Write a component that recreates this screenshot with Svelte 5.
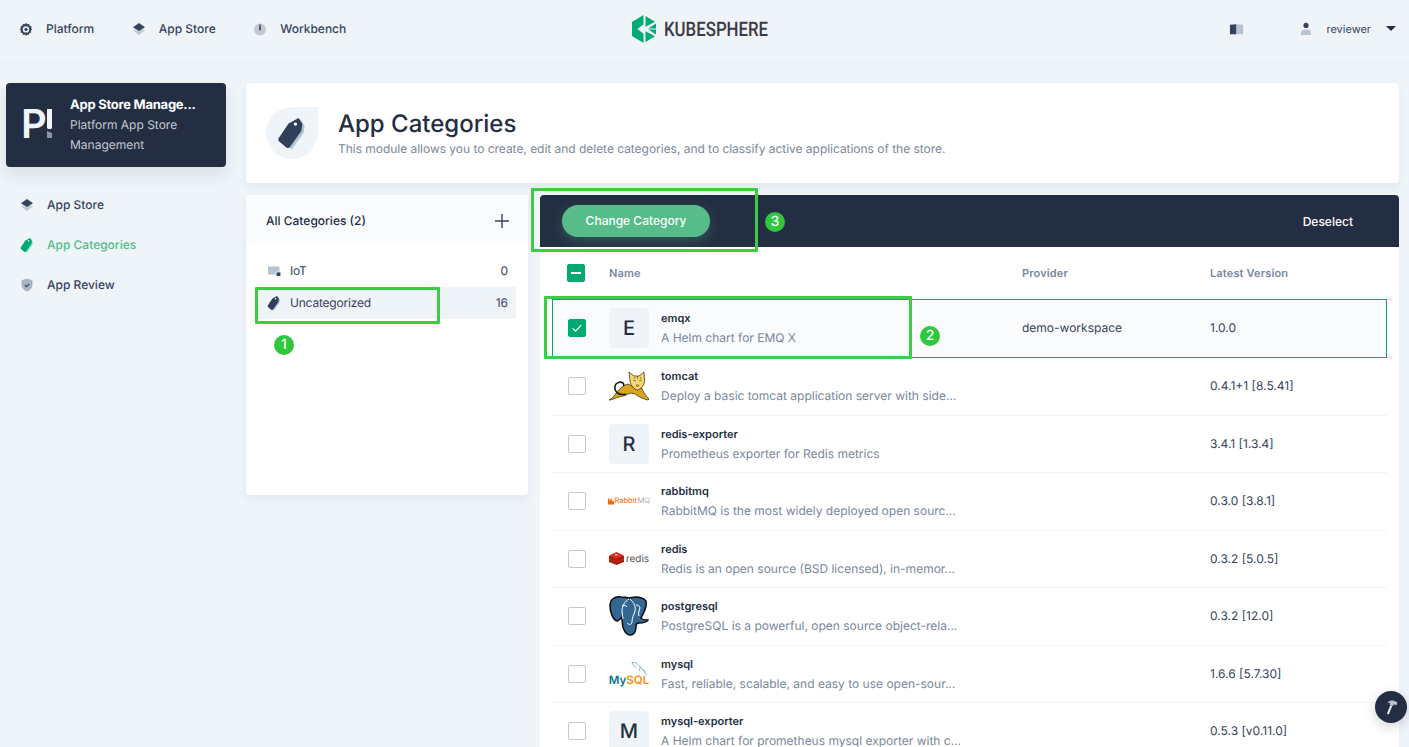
<script lang="ts">
  const navItems = [
    { label: "App Store", icon: "store", active: false },
    { label: "App Categories", icon: "tag", active: true },
    { label: "App Review", icon: "review", active: false },
  ];

  const apps = [
    { name: "emqx", desc: "A Helm chart for EMQ X", provider: "demo-workspace", version: "1.0.0", logo: "E", selected: true },
    { name: "tomcat", desc: "Deploy a basic tomcat application server with side...", provider: "", version: "0.4.1+1 [8.5.41]", logo: "tomcat" },
    { name: "redis-exporter", desc: "Prometheus exporter for Redis metrics", provider: "", version: "3.4.1 [1.3.4]", logo: "R" },
    { name: "rabbitmq", desc: "RabbitMQ is the most widely deployed open sourc...", provider: "", version: "0.3.0 [3.8.1]", logo: "rabbitmq" },
    { name: "redis", desc: "Redis is an open source (BSD licensed), in-memor...", provider: "", version: "0.3.2 [5.0.5]", logo: "redis" },
    { name: "postgresql", desc: "PostgreSQL is a powerful, open source object-rela...", provider: "", version: "0.3.2 [12.0]", logo: "postgresql" },
    { name: "mysql", desc: "Fast, reliable, scalable, and easy to use open-sour...", provider: "", version: "1.6.6 [5.7.30]", logo: "mysql" },
    { name: "mysql-exporter", desc: "A Helm chart for prometheus mysql exporter with c...", provider: "", version: "0.5.3 [v0.11.0]", logo: "M" },
  ];
</script>

{#snippet tagIcon(main, back, size = 16)}
  <svg viewBox="0 0 16 16" width={size} height={size}>
    <path d="M7.4 4.500L12.100 1.700L13.900 4.800L13.400 8L8 15.600L3 13z" fill={back} />
    <path d="M6.400 3.500L11.100 .9L12.900 3.800L12.400 7L7 14.600c-.4.5-1 .6-1.500.3L2 12c-.5-.4-.6-1-.3-1.500z" fill={main} />
    <circle cx="9.600" cy="3.800" r=".8" fill="#fff" />
  </svg>
{/snippet}

{#snippet storeIcon()}
  <svg viewBox="0 0 16 16" width="16" height="16">
    <path d="M2 9.200l2.400-1L8 9.800l3.600-1.600 2.400 1L8 14z" fill="#c1c9d1" />
    <path d="M8 2l6 4.200L8 10 2 6.200z" fill="#36435c" />
  </svg>
{/snippet}

<div class="page">
  <header class="topbar">
    <nav class="topnav">
      <a class="topnav-item">
        <svg viewBox="0 0 16 16" width="16" height="16">
          <path d="M8 1.800l1.200 1.500 1.900-.4.6 1.900 1.900.6-.4 1.900L14.200 8.500l-1.300 1.100.4 1.900-1.900.5-.6 1.900-1.900-.4L8 15l-1.100-1.500-1.900.4-.6-1.900-1.900-.5.4-1.900L1.800 8.500l1.100-1.200-.4-1.900 1.900-.6.6-1.900 1.900.4z" fill="#36435c" />
          <circle cx="8" cy="8.400" r="3.200" fill="#eff4f9" />
          <circle cx="8" cy="8.400" r="1.600" fill="#36435c" />
        </svg>
        Platform
      </a>
      <a class="topnav-item">{@render storeIcon()} App Store</a>
      <a class="topnav-item">
        <svg viewBox="0 0 16 16" width="16" height="16">
          <circle cx="8" cy="8.400" r="6" fill="#c1c9d1" />
          <path d="M7.400 3.400h1.200l.3 5.200a.9.9 0 1 1-1.800 0z" fill="#36435c" />
        </svg>
        Workbench
      </a>
    </nav>

    <div class="logo">
      <svg viewBox="0 0 24 28" width="24" height="28">
        <path d="M11.500 0v9.200L5.400 14l6.100 4.800V28L0 21V7z" fill="#00aa72" />
        <path d="M13.500 1l9.500 5.800-9.500 5z" fill="#00aa72" />
        <path d="M24 8.400v5.200l-7.600-.1z" fill="#00aa72" />
        <path d="M24 14.400v5.200l-7.600-5.100z" fill="#00aa72" />
        <path d="M13.500 16.200l9.500 5-9.500 5.800z" fill="#00aa72" />
      </svg>
      <span class="logo-text">KUBESPHERE</span>
    </div>

    <div class="topbar-right">
      <svg class="book" viewBox="0 0 16 14" width="15" height="14">
        <path d="M1 2.500l7-.5v10.500l-7 .2z" fill="#36435c" />
        <path d="M8 2l7 .5v10l-7 .2z" fill="#b6c3d1" />
      </svg>
      <div class="user">
        <svg viewBox="0 0 16 16" width="16" height="16">
          <circle cx="8" cy="4.400" r="2.600" fill="#36435c" />
          <path d="M3 14v-2.600C3 9.400 5 8.400 8 8.400s5 1 5 3V14z" fill="#b6c3d1" />
        </svg>
        <span>reviewer</span>
        <i class="caret"></i>
      </div>
    </div>
  </header>

  <div class="body">
    <aside class="sidebar">
      <div class="project-card">
        <div class="project-logo">
          <span class="p">P</span>
          <svg class="bang" viewBox="0 0 5 29" width="5" height="29">
            <path d="M0 0h5v19l-1 1H1l-1-1z" fill="#eff4f9" />
            <path d="M0 22l5 2v5H0z" fill="#8a95a5" />
          </svg>
        </div>
        <div class="project-text">
          <strong>App Store Manage...</strong>
          <span>Platform App Store Management</span>
        </div>
      </div>

      <ul class="side-nav">
        {#each navItems as item}
          <li class:active={item.active}>
            {#if item.icon === "store"}
              {@render storeIcon()}
            {:else if item.icon === "tag"}
              {@render tagIcon("#00aa72", "#90e0c5")}
            {:else}
              <svg viewBox="0 0 16 16" width="16" height="16">
                <path d="M8 1.600l5.400 1.600v5c0 3-2.400 5.200-5.400 6.200-3-1-5.400-3.200-5.400-6.200v-5z" fill="#a9b5c4" />
                <path d="M5.800 8l1.600 1.600 2.800-2.800" fill="none" stroke="#36435c" stroke-width="1.100" />
              </svg>
            {/if}
            {item.label}
          </li>
        {/each}
      </ul>
    </aside>

    <main class="content">
      <section class="banner">
        <div class="banner-icon">
          {@render tagIcon("#2f4058", "#b6c3d1", 34)}
        </div>
        <div class="banner-text">
          <h1>App Categories</h1>
          <p>This module allows you to create, edit and delete categories, and to classify active applications of the store.</p>
        </div>
      </section>

      <div class="columns">
        <section class="categories">
          <div class="categories-head">
            <span>All Categories (2)</span>
            <svg viewBox="0 0 16 16" width="16" height="16">
              <path d="M8 1v14M1 8h14" stroke="#36435c" stroke-width="1.400" />
            </svg>
          </div>
          <ul class="category-list">
            <li>
              <svg viewBox="0 0 16 16" width="16" height="16">
                <path d="M2 3.500h11.500v8H2z" fill="#b6c3d1" />
                <path d="M9.600 8.600h5v4.600h-5z" fill="#eff4f9" />
                <path d="M10.600 9.400h3.800v3.600h-3.800z" fill="#2f4058" />
              </svg>
              <span>IoT</span>
              <b>0</b>
            </li>
            <li class="current">
              {@render tagIcon("#2f4058", "#b6c3d1")}
              <span>Uncategorized</span>
              <b>16</b>
            </li>
          </ul>
        </section>

        <section class="apps">
          <div class="batch-bar">
            <button class="change-btn" type="button">Change Category</button>
            <button class="deselect" type="button">Deselect</button>
          </div>

          <div class="table">
            <div class="row head">
              <span class="check checked"><i class="dash"></i></span>
              <span class="col-name">Name</span>
              <span class="col-provider">Provider</span>
              <span class="col-version">Latest Version</span>
            </div>

            {#each apps as app}
              <div class="row" class:selected={app.selected}>
                {#if app.selected}
                  <span class="check checked">
                    <svg viewBox="0 0 16 16" width="16" height="16">
                      <path d="M3.600 8.400l3 2.800 5.600-6" fill="none" stroke="#fff" stroke-width="1.200" />
                    </svg>
                  </span>
                {:else}
                  <span class="check"></span>
                {/if}

                <div class="col-name app-cell">
                  <div class="app-logo" class:letter={app.logo.length === 1}>
                    {#if app.logo.length === 1}
                      {app.logo}
                    {:else if app.logo === "tomcat"}
                      <svg viewBox="0 0 40 30" width="40" height="30">
                        <path d="M0 29c3-1 5-4 8-8 3-4 7-7 11-8l6 3 5-3 3 5c2 4 4 7 7 10l-1 1c-5-1-9-3-13-6-2-1-5-1-7 0-2 1-3 2-5 2l-4 1c-4 1-7 3-10 3z" fill="#d9a41f" stroke="#2c2410" stroke-width=".7" />
                        <path d="M20 1l5 4h5l5-4 .6 9c-.6 5-3.600 8-7.100 9-3.500-1-6.500-4-7.500-9z" fill="#f6d873" stroke="#2c2410" stroke-width=".7" />
                        <path d="M24 9l3 1M33 9l-3 1M27 14h3l-1.500 2zM25 6l1 2M32 6l-1 2M28.500 5v3" stroke="#6b5216" stroke-width=".7" fill="none" />
                        <path d="M17 23C10 25 5 21 6 15c.6-3 5-5 8-3 1 1 1 2 0 2.500" fill="none" stroke="#1a1a1a" stroke-width="1.600" />
                      </svg>
                    {:else if app.logo === "rabbitmq"}
                      <span class="rabbit">
                        <svg viewBox="0 0 7 7" width="6" height="7"><path d="M0 0h1.600v2.400H2.700V0h1.600v3H7v4H0z" fill="#f60" /></svg><span class="rabbit-a">Rabbit</span><span class="rabbit-b">MQ</span>
                      </span>
                    {:else if app.logo === "redis"}
                      <span class="redis">
                        <svg viewBox="0 0 15 13" width="15" height="13">
                          <path d="M0 4v6l7.500 3L15 10V4z" fill="#a41e11" />
                          <path d="M7.500 0L15 3.500 7.500 7 0 3.500z" fill="#d82c20" />
                          <path d="M0 7l7.500 3L15 7" fill="none" stroke="#d82c20" stroke-width=".8" />
                          <path d="M6 2.400h2.600v1H6z" fill="#fff" />
                        </svg>
                        redis
                      </span>
                    {:else if app.logo === "postgresql"}
                      <svg viewBox="0 0 40 40" width="40" height="40">
                        <path d="M12 1C6 0 1 3 1 10c0 6 3 14 7 15 2 0 4-3 5-4 0 6 1 17 8 18 5 0 6-4 6-9 0-2 1-3 3-3 4 0 8-1 9-3-2 0-6 0-7-2 3-5 6-12 5-17C36 3 31 1 27 1c-3 0-5 1-7 1-3-1-5-1-8-1z" fill="#336791" stroke="#0c0c0c" stroke-width="1.500" />
                        <path d="M20 3c-4 2-7 7-7 12 0 3 1 5 1 8M21 3c3 3 6 6 5 12-1 4-3 6-3 11 0 3-3 3-5 1M13 10c2-1 4-1 5 1M27 9c2 0 4 1 4 3-1 3-2 5-1 8" fill="none" stroke="#fff" stroke-width="1" />
                      </svg>
                    {:else}
                      <span class="mysql">
                        <svg viewBox="0 0 20 16" width="18" height="15">
                          <path d="M1 1c4 0 7 2 9 5 2 2 5 4 6 8M1 1c1 3 3 5 5 6M10 6c0 2-1 3 0 5M16 14l2 1M12 8c1 2 3 3 4 3" fill="none" stroke="#3d8fa5" stroke-width=".7" />
                        </svg>
                        <span class="mysql-text"><em>My</em><u>SQL</u></span>
                      </span>
                    {/if}
                  </div>
                  <div class="app-text">
                    <strong>{app.name}</strong>
                    <span>{app.desc}</span>
                  </div>
                </div>
                <span class="col-provider">{app.provider}</span>
                <span class="col-version">{app.version}</span>
              </div>
            {/each}
          </div>
        </section>
      </div>
    </main>
  </div>

  <!-- tutorial markers drawn over the screenshot -->
  <div class="mark box-1"></div>
  <div class="mark box-2"></div>
  <div class="mark box-3"></div>
  <span class="badge b-1">1</span>
  <span class="badge b-2">2</span>
  <span class="badge b-3">3</span>

  <button class="help" type="button" aria-label="Tools">
    <svg viewBox="0 0 16 16" width="18" height="18">
      <path d="M7.400 6.400L4.400 14l1.600.6 3-7.400z" fill="#eff4f9" />
      <path d="M5.600 3.400C7.600 1.800 10.200 1.800 13.600 4l-.8 2.600-2-1-1 1.600-3-1.200.4-1.400c-.6-.6-1.600-.8-2.600-.6z" fill="#b6c3d1" />
    </svg>
  </button>
</div>

<style>
  :global(body) {
    margin: 0;
    background: #eff4f9;
    overflow: hidden;
  }

  .page {
    position: relative;
    height: 747px;
    overflow: hidden;
    background: #eff4f9;
    color: #242e42;
    font-family: Inter, "Noto Sans", sans-serif;
    font-size: 12px;
    line-height: 20px;
    text-rendering: geometricPrecision;
  }

  .topbar {
    position: relative;
    display: flex;
    align-items: center;
    justify-content: space-between;
    height: 63px;
    padding: 0 13px 5px 18px;
    box-sizing: border-box;
    border-bottom: 1px solid #e8edf3;
  }

  .topnav {
    display: flex;
    gap: 36.5px;
  }

  .topnav-item {
    display: flex;
    align-items: center;
    gap: 12px;
    color: #36435c;
    font-weight: 500;
  }

  .logo {
    position: absolute;
    left: 632px;
    top: 15px;
    display: flex;
    align-items: center;
    gap: 8px;
  }

  .logo-text {
    font-family: Roboto, sans-serif;
    font-size: 20px;
    font-weight: 500;
    color: #3d3a47;
    transform: scaleX(0.84);
    transform-origin: left;
  }

  .topbar-right {
    display: flex;
    align-items: center;
    gap: 54px;
  }

  .user {
    display: flex;
    align-items: center;
    gap: 12px;
    color: #36435c;
    font-size: 11px;
  }

  .caret {
    margin-left: 3px;
    border: 5px solid transparent;
    border-top: 5px solid #242e42;
    border-bottom: 0;
  }

  .body {
    display: flex;
    padding: 20px 10px 0 6px;
    gap: 20px;
  }

  .sidebar {
    flex: 0 0 220px;
  }

  .project-card {
    display: flex;
    align-items: center;
    gap: 16px;
    box-sizing: border-box;
    height: 84px;
    padding: 0 18px;
    border-radius: 4px;
    background: #242e42;
    color: #fff;
    box-shadow: 0 8px 16px rgba(36, 46, 66, 0.1);
  }

  .project-logo {
    position: relative;
    flex: 0 0 30px;
    height: 40px;
  }

  .p {
    position: absolute;
    left: -3px;
    top: -1px;
    font-size: 40px;
    line-height: 40px;
    font-weight: 600;
    color: #eff4f9;
  }

  .bang {
    position: absolute;
    left: 23px;
    top: 4px;
  }

  .project-text {
    display: flex;
    flex-direction: column;
    min-width: 0;
  }

  .project-text strong {
    font-size: 13px;
    font-weight: 700;
    letter-spacing: -0.25px;
  }

  .project-text span {
    color: #c1c9d1;
  }

  .side-nav {
    list-style: none;
    margin: 18px 0 0;
    padding: 0 0 0 13px;
  }

  .side-nav li {
    display: flex;
    align-items: center;
    gap: 12px;
    height: 40px;
    color: #36435c;
    font-weight: 500;
  }

  .side-nav li.active {
    color: #55bc8a;
  }

  .content {
    flex: 1;
    min-width: 0;
  }

  .banner {
    display: flex;
    align-items: center;
    gap: 20px;
    box-sizing: border-box;
    height: 100px;
    padding: 0 20px;
    border-radius: 4px;
    background: #fff;
    box-shadow: 0 4px 8px rgba(36, 46, 66, 0.06);
  }

  .banner-icon {
    display: flex;
    align-items: center;
    justify-content: center;
    width: 52px;
    height: 52px;
    background: #eff4f9;
    border-radius: 50% 0 50% 50%;
  }

  .banner-text {
    padding-top: 2px;
  }

  .banner h1 {
    margin: 0;
    font-size: 24px;
    line-height: 30px;
    font-weight: 500;
  }

  .banner p {
    margin: 0;
    color: #79879c;
    letter-spacing: -0.03px;
  }

  .columns {
    display: flex;
    align-items: flex-start;
    gap: 12px;
    margin-top: 12px;
  }

  .categories {
    flex: 0 0 282px;
    height: 300px;
    border-radius: 4px;
    background: #fff;
    box-shadow: 0 4px 8px rgba(36, 46, 66, 0.06);
  }

  .categories-head {
    display: flex;
    align-items: center;
    justify-content: space-between;
    box-sizing: border-box;
    height: 48px;
    padding: 4px 18px 0 20px;
    background: #f9fbfd;
    font-weight: 500;
  }

  .category-list {
    list-style: none;
    margin: 0;
    padding: 12px 12px 0;
  }

  .category-list li {
    display: flex;
    align-items: center;
    gap: 8px;
    height: 32px;
    padding: 0 8px;
    color: #36435c;
  }

  .category-list li span {
    flex: 1;
    letter-spacing: -0.2px;
  }

  .category-list b {
    font-weight: 400;
  }

  .category-list li.current {
    background: #eff4f9;
  }

  .apps {
    flex: 1;
    min-width: 0;
    background: #fff;
  }

  .batch-bar {
    display: flex;
    align-items: center;
    justify-content: space-between;
    height: 52px;
    padding: 0 46px 0 22px;
    box-sizing: border-box;
    border-radius: 4px 4px 0 0;
    background: #242e42;
  }

  .change-btn {
    height: 32px;
    width: 148px;
    padding: 0 0 1px;
    border: 0;
    border-radius: 16px;
    background: #55bc8a;
    color: #fff;
    font: 500 12px Inter, sans-serif;
    box-shadow: 0 4px 12px rgba(85, 188, 138, 0.3);
  }

  .deselect {
    padding: 0;
    border: 0;
    background: none;
    color: #fff;
    font: 500 12px Inter, sans-serif;
  }

  .table {
    padding: 0 12px;
  }

  .row {
    display: flex;
    align-items: center;
    box-sizing: border-box;
    height: 57.5px;
    border-bottom: 1px solid #eff4f9;
  }

  .row.head {
    height: 52px;
    border-bottom: 0;
    color: #79879c;
    font-weight: 600;
    font-size: 11px;
    letter-spacing: 0.15px;
  }

  .row.selected {
    height: 59px;
    padding-bottom: 1px;
    border: 1px solid #00aa72;
    background: #f9fbfd;
  }

  .check {
    flex: 0 0 16px;
    width: 16px;
    height: 16px;
    margin: 0 23px 0 16px;
    border: 1px solid #c1c9d1;
    border-radius: 2px;
    background: #fff;
    display: flex;
    align-items: center;
    justify-content: center;
  }

  .check.checked {
    border-color: #00aa72;
    background: #00aa72;
  }

  .selected .check {
    margin-left: 15px;
  }

  .head .check {
    margin: 0 24px 0 15px;
  }

  .dash {
    width: 10px;
    height: 1.5px;
    background: #fff;
  }

  .col-name {
    flex: 0 0 413px;
  }

  .col-provider {
    flex: 0 0 188px;
    color: #36435c;
  }

  .col-version {
    color: #36435c;
  }

  .head .col-provider,
  .head .col-version {
    color: #79879c;
  }

  .app-cell {
    display: flex;
    align-items: center;
    gap: 12px;
  }

  .app-logo {
    display: flex;
    align-items: center;
    justify-content: center;
    flex: 0 0 40px;
    width: 40px;
    height: 40px;
    overflow: visible;
  }

  .app-logo.letter {
    border-radius: 4px;
    background: #eff4f9;
    font-size: 20px;
    font-weight: 500;
  }

  .app-text {
    display: flex;
    flex-direction: column;
    white-space: nowrap;
  }

  .app-text strong {
    font-weight: 600;
    font-size: 11px;
  }

  .app-text span {
    color: #79879c;
  }

  .rabbit {
    display: flex;
    align-items: center;
    gap: 0.5px;
    font-size: 7.5px;
    white-space: nowrap;
  }

  .rabbit-a {
    color: #f60;
  }

  .rabbit-b {
    color: #aaa;
  }

  .redis {
    display: flex;
    align-items: center;
    gap: 2px;
    font-size: 10px;
    color: #555;
    white-space: nowrap;
  }

  .mysql {
    display: flex;
    flex-direction: column;
    align-items: flex-end;
    line-height: 12px;
  }

  .mysql-text {
    margin-top: -2px;
    font-size: 11.5px;
    font-weight: 600;
  }

  .mysql-text em {
    color: #00758f;
    font-style: normal;
  }

  .mysql-text u {
    color: #f29111;
    text-decoration: none;
  }

  .mark {
    position: absolute;
    box-sizing: border-box;
    border: 3px solid #3dcd44;
    border-radius: 1px;
  }

  .box-1 {
    left: 255px;
    top: 287px;
    width: 185px;
    height: 37px;
  }

  .box-2 {
    left: 544px;
    top: 296px;
    width: 368px;
    height: 63px;
  }

  .box-3 {
    left: 531px;
    top: 188px;
    width: 227px;
    height: 64px;
  }

  .badge {
    position: absolute;
    width: 20px;
    height: 20px;
    border-radius: 50%;
    background: #2fc83c;
    color: #fff;
    text-align: center;
    font-size: 14px;
    font-weight: 500;
    line-height: 20px;
  }

  .b-1 {
    left: 274px;
    top: 335px;
  }

  .b-2 {
    left: 920px;
    top: 326px;
  }

  .b-3 {
    left: 765px;
    top: 212px;
  }

  .help {
    position: absolute;
    left: 1375px;
    top: 691px;
    display: flex;
    align-items: center;
    justify-content: center;
    width: 32px;
    height: 32px;
    padding: 0;
    border: 0;
    border-radius: 50%;
    background: #242e42;
    box-shadow: 0 4px 12px rgba(36, 46, 66, 0.2);
  }
</style>
